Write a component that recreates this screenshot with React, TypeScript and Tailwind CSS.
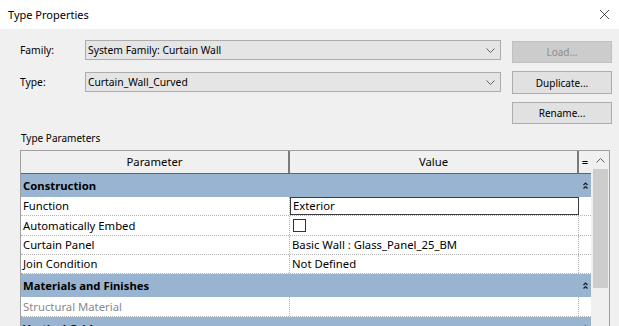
import { X } from 'lucide-react';

type Row =
  | { kind: 'group'; label: string }
  | { kind: 'data'; label: string; value?: string; h: number; edit?: boolean; check?: boolean; muted?: boolean };

const ROWS: Row[] = [
  { kind: 'group', label: 'Construction' },
  { kind: 'data', label: 'Function', value: 'Exterior', h: 19, edit: true },
  { kind: 'data', label: 'Automatically Embed', h: 20, check: true },
  { kind: 'data', label: 'Curtain Panel', value: 'Basic Wall : Glass_Panel_25_BM', h: 19 },
  { kind: 'data', label: 'Join Condition', value: 'Not Defined', h: 19 },
  { kind: 'group', label: 'Materials and Finishes' },
  { kind: 'data', label: 'Structural Material', h: 20, muted: true },
  { kind: 'group', label: 'Vertical Grid' },
];

function Chevron({ up = false }: { up?: boolean }) {
  return (
    <svg width="9" height="5" viewBox="0 0 9 5" className="shrink-0">
      <path
        d={up ? 'M0.5 4.5 L4.5 0.5 L8.5 4.5' : 'M0.5 0.5 L4.5 4.5 L8.5 0.5'}
        fill="none"
        stroke="#606060"
        strokeWidth="1"
      />
    </svg>
  );
}

function CollapseIcon() {
  return (
    <svg width="5" height="7" viewBox="0 0 5 7">
      <path d="M0.5 3 L2.5 1 L4.5 3 M0.5 6.5 L2.5 4.5 L4.5 6.5" fill="none" stroke="#1a1a1a" strokeWidth="1.2" />
    </svg>
  );
}

function Combo({ value }: { value: string }) {
  return (
    <div className="flex items-center justify-between w-[416px] h-[20px] bg-[#e5e5e5] border border-[#acacac] pl-[2px] pr-[5px] text-[10.3px]">
      <span>{value}</span>
      <Chevron />
    </div>
  );
}

function Button({ label, disabled = false, className = '' }: { label: string; disabled?: boolean; className?: string }) {
  return (
    <div
      className={
        'w-[100px] flex items-center justify-center border text-[10px] ' +
        (disabled ? 'bg-[#cccccc] border-[#bfbfbf] text-[#8d8d8d] ' : 'bg-[#e1e1e1] border-[#adadad] text-black ') +
        className
      }
    >
      {label}
    </div>
  );
}

export default function App() {
  return (
    <div className="w-[619px] h-[326px] overflow-hidden bg-[#f0f0f0] text-[11.3px] leading-[16px] text-black font-['Noto_Sans',sans-serif]">
      {/* title bar */}
      <div className="h-[29px] bg-white flex items-center justify-between pl-[8px] pr-[6px]">
        <span className="text-[11px]">Type Properties</span>
        <X className="w-[17px] h-[17px]" strokeWidth={1} />
      </div>

      {/* family / type rows */}
      <div className="flex mt-[11px] h-[23px]">
        <div className="w-[85px] pl-[20px] leading-[20px] text-[10.3px]">Family:</div>
        <Combo value="System Family: Curtain Wall" />
        <Button label="Load..." disabled className="ml-[11px] mt-[1px] h-[22px]" />
      </div>
      <div className="flex mt-[8px] h-[23px]">
        <div className="w-[85px] pl-[20px] leading-[20px] mt-[1px] text-[10.3px]">Type:</div>
        <div className="mt-[1px]">
          <Combo value="Curtain_Wall_Curved" />
        </div>
        <Button label="Duplicate..." className="ml-[11px] h-[23px]" />
      </div>
      <div className="flex justify-end pr-[7px] mt-[8px]">
        <Button label="Rename..." className="h-[22px]" />
      </div>

      <div className="pl-[21px] mt-[6px] text-[10px]">Type Parameters</div>

      {/* property grid */}
      <div className="ml-[20px] mt-[4px] w-[590px] border border-[#a0a0a0] flex bg-white">
        <div className="w-[570px]">
          <div className="flex h-[23px] bg-[#f0f0f0] border-b border-[#646464]">
            <div className="w-[269px] flex items-center justify-center border-r-2 border-[#7a7a7a]">Parameter</div>
            <div className="w-[289px] flex items-center justify-center border-r-2 border-[#7a7a7a]">Value</div>
            <div className="w-[12px] flex items-center justify-center">=</div>
          </div>
          {ROWS.map((row) =>
            row.kind === 'group' ? (
              <div key={row.label} className="flex items-center h-[23px] bg-[#99b4d1] font-bold">
                <div className="w-[558px] pl-[2px]">{row.label}</div>
                <div className="w-[12px] flex justify-center">
                  <CollapseIcon />
                </div>
              </div>
            ) : (
              <div
                key={row.label}
                className="flex border-b border-dotted border-[#b4b4b4]"
                style={{ height: row.h }}
              >
                <div className={'w-[269px] pl-[2px] flex items-center border-r border-dotted border-[#b4b4b4] ' + (row.muted ? 'text-[#8a8a8a]' : '')}>
                  {row.label}
                </div>
                <div
                  className={
                    'w-[289px] pl-[2px] flex items-center ' +
                    (row.edit ? 'border border-[#3c3c3c]' : 'border-r border-dotted border-[#b4b4b4]')
                  }
                >
                  {row.check ? <div className="w-[13px] h-[13px] border border-[#333333] bg-white ml-[1px]" /> : row.value}
                </div>
                <div className="w-[12px]" />
              </div>
            )
          )}
        </div>

        {/* scrollbar */}
        <div className="w-[18px] bg-[#f0f0f0] flex flex-col items-center">
          <div className="h-[18px] flex items-center justify-center">
            <Chevron up />
          </div>
          <div className="w-[15px] h-[119px] bg-[#cdcdcd]" />
        </div>
      </div>
    </div>
  );
}
